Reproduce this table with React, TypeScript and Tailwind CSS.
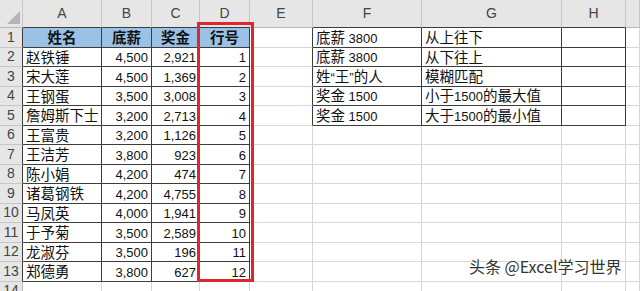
import type { ReactNode } from 'react';

const colWidths = [23, 79, 50, 48, 50, 63, 109, 140, 64, 14];
const letters = ['', 'A', 'B', 'C', 'D', 'E', 'F', 'G', 'H', ''];

const mainRows: string[][] = [
  ['姓名', '底薪', '奖金', '行号'],
  ['赵铁锤', '4,500', '2,921', '1'],
  ['宋大莲', '4,500', '1,369', '2'],
  ['王钢蛋', '3,500', '3,008', '3'],
  ['詹姆斯下士', '3,200', '2,713', '4'],
  ['王富贵', '3,200', '1,126', '5'],
  ['王洁芳', '3,800', '923', '6'],
  ['陈小娟', '4,200', '474', '7'],
  ['诸葛钢铁', '4,200', '4,755', '8'],
  ['马凤英', '4,000', '1,941', '9'],
  ['于予菊', '3,500', '2,589', '10'],
  ['龙淑芬', '3,500', '196', '11'],
  ['郑德勇', '3,800', '627', '12'],
];

const sideRows: string[][] = [
  ['底薪 3800', '从上往下'],
  ['底薪 3800', '从下往上'],
  ['姓“王”的人', '模糊匹配'],
  ['奖金 1500', '小于1500的最大值'],
  ['奖金 1500', '大于1500的最小值'],
];

// latin runs (and curly quotes) get the narrower latin font
function Txt({ s }: { s: string }) {
  const parts = s.split(/([\x00-\x7f\u201c\u201d]+)/).filter((p) => p !== '');
  return (
    <span className="whitespace-pre">
      {parts.map((p, i) =>
        /^[\x00-\x7f\u201c\u201d]+$/.test(p) ? (
          <span key={i} className="font-['Liberation_Sans',sans-serif] text-[13px]">
            {p}
          </span>
        ) : (
          <span key={i}>{p}</span>
        ),
      )}
    </span>
  );
}

// r: 1..14 sheet row, c: 1..9 sheet column
function inTable(r: number, c: number) {
  if (r >= 1 && r <= 13 && c >= 1 && c <= 4) return true;
  if (r >= 1 && r <= 5 && c >= 6 && c <= 8) return true;
  return false;
}

function cellContent(r: number, c: number): { text: string; align: string; bold?: boolean; blue?: boolean } | null {
  if (c >= 1 && c <= 4 && r >= 1 && r <= 13) {
    const text = mainRows[r - 1][c - 1];
    if (r === 1) return { text, align: 'justify-center', bold: true, blue: true };
    return { text, align: c === 1 ? 'justify-start' : 'justify-end' };
  }
  if ((c === 6 || c === 7) && r >= 1 && r <= 5) {
    return { text: sideRows[r - 1][c - 6], align: 'justify-start' };
  }
  return null;
}

export default function App() {
  const cells: ReactNode[] = [];

  // column header row
  letters.forEach((l, c) => {
    const darkBottom = inTable(1, c);
    cells.push(
      <div
        key={`h${c}`}
        className={`relative flex items-end justify-center pb-[3px] bg-[#e6e6e6] border-r border-r-[#c6c6c6] border-b ${
          darkBottom ? 'border-b-[#3c3c3c]' : 'border-b-[#b8b8b8]'
        } text-[14px] text-[#444] font-['Liberation_Sans',sans-serif]`}
      >
        {c === 0 ? (
          <svg className="absolute right-[2px] bottom-[3px]" width="13" height="13" viewBox="0 0 13 13">
            <polygon points="13,0 13,13 0,13" fill="#b5b5b5" />
          </svg>
        ) : (
          l
        )}
      </div>,
    );
  });

  for (let r = 1; r <= 14; r++) {
    for (let c = 0; c < colWidths.length; c++) {
      if (c === 0) {
        const dark = inTable(r, 1);
        cells.push(
          <div
            key={`${r}-${c}`}
            className={`flex items-center justify-center bg-[#e6e6e6] border-b border-b-[#c6c6c6] border-r ${
              dark ? 'border-r-[#3c3c3c]' : 'border-r-[#b8b8b8]'
            } text-[14px] text-[#444] font-['Liberation_Sans',sans-serif]`}
          >
            {r}
          </div>,
        );
        continue;
      }
      const darkR = inTable(r, c) || inTable(r, c + 1);
      const darkB = inTable(r, c) || inTable(r + 1, c);
      const content = cellContent(r, c);
      cells.push(
        <div
          key={`${r}-${c}`}
          className={`flex items-center overflow-visible whitespace-nowrap px-[3px] border-r border-b ${
            darkR ? 'border-r-[#3c3c3c]' : 'border-r-[#d6d6d6]'
          } ${darkB ? 'border-b-[#3c3c3c]' : 'border-b-[#d6d6d6]'} ${content?.align ?? ''} ${
            content?.blue ? 'bg-[#9bc2e6]' : 'bg-white'
          } ${content?.bold ? 'font-bold' : ''} text-[14.5px] leading-none text-[#111]`}
        >
          {content && <Txt s={content.text} />}
        </div>,
      );
    }
  }

  return (
    <div className="relative w-[640px] h-[291px] overflow-hidden bg-white font-['Noto_Sans_CJK_SC','Liberation_Sans',sans-serif]">
      <div className="grid grid-cols-[23px_79px_50px_48px_50px_63px_109px_140px_64px_14px] grid-rows-[28px_repeat(14,19.5px)]">
        {cells}
      </div>

      {/* red highlight around column D */}
      <div className="absolute left-[197px] top-[22px] w-[57px] h-[260px] border-[3.5px] border-[#e0262d]" />

      {/* watermark */}
      <div className="absolute left-[469px] top-[254px] text-[16px] text-[#333] whitespace-nowrap font-['Noto_Sans_CJK_SC',sans-serif] [text-shadow:0_0_2px_#fff,0_0_2px_#fff,0_0_3px_#fff]">
        头条 @Excel学习世界
      </div>
    </div>
  );
}
